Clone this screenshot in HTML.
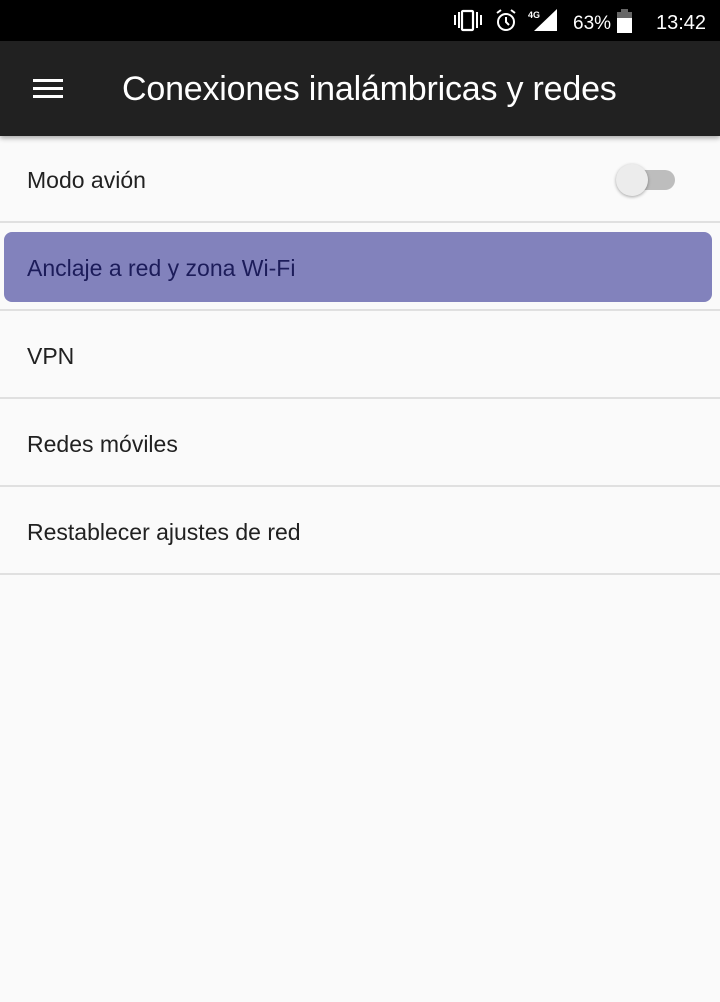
<!DOCTYPE html>
<html><head><meta charset="utf-8"><style>
body{margin:0;width:720px;height:1002px;background:#fafafa;font-family:"Liberation Sans",sans-serif;position:relative;overflow:hidden}
.sb{position:absolute;left:0;top:0;width:720px;height:41px;background:#000;color:#fff}
.tb{position:absolute;left:0;top:41px;width:720px;height:95px;background:#212121;box-shadow:0 2px 5px rgba(0,0,0,.35)}
.t{position:absolute;left:27px;font-size:23px;color:#212121;line-height:26px}
.d{position:absolute;left:0;width:720px;height:2px;background:#e0e0e0}
</style></head><body>
<div class="sb">
<svg width="720" height="41" style="position:absolute;left:0;top:0">
<rect x="454" y="15" width="2" height="10" fill="#fff"/><rect x="458" y="12" width="2" height="16" fill="#fff"/>
<rect x="462" y="11" width="11" height="19" rx="1" fill="none" stroke="#fff" stroke-width="2.2"/>
<rect x="476" y="12" width="2" height="16" fill="#fff"/><rect x="480" y="15" width="2" height="10" fill="#fff"/>
<circle cx="506" cy="22" r="8" fill="none" stroke="#fff" stroke-width="2"/>
<path d="M506 17v5l3 3M497 13l4-3M515 13l-4-3" stroke="#fff" stroke-width="2" fill="none"/>
<text x="528" y="18" font-size="9" font-weight="bold" fill="#fff" font-family="Liberation Sans">4G</text>
<path d="M534 31L557 9V31Z" fill="#fff"/>
<text x="573" y="29" font-size="19" fill="#fff" font-family="Liberation Sans">63%</text>
<rect x="617" y="12" width="15" height="21" fill="#fff"/><rect x="617" y="12" width="15" height="6" fill="#666"/><rect x="621" y="9" width="7" height="3" fill="#666"/>
<text x="656" y="29" font-size="20" fill="#fff" font-family="Liberation Sans">13:42</text>
</svg></div>
<div class="tb">
<div style="position:absolute;left:33px;top:38px;width:30px;height:3px;background:#fff;box-shadow:0 8px 0 #fff,0 16px 0 #fff"></div>
<div style="position:absolute;left:122px;top:29px;font-size:34px;color:#fff;line-height:38px;letter-spacing:-0.2px">Conexiones inalámbricas y redes</div>
</div>
<div class="t" style="top:167px">Modo avión</div>
<div style="position:absolute;left:618px;top:170px;width:57px;height:20px;border-radius:10px;background:#bdbdbd"></div>
<div style="position:absolute;left:616px;top:164px;width:32px;height:32px;border-radius:50%;background:#ececec;box-shadow:0 1px 3px rgba(0,0,0,.35)"></div>
<div class="d" style="top:221px"></div>
<div style="position:absolute;left:4px;top:232px;width:708px;height:70px;border-radius:8px;background:#8282bc"></div>
<div class="t" style="top:255px;color:#1c1c5a">Anclaje a red y zona Wi-Fi</div>
<div class="d" style="top:309px"></div>
<div class="t" style="top:343px">VPN</div>
<div class="d" style="top:397px"></div>
<div class="t" style="top:431px">Redes móviles</div>
<div class="d" style="top:485px"></div>
<div class="t" style="top:519px">Restablecer ajustes de red</div>
<div class="d" style="top:573px"></div>
</body></html>
